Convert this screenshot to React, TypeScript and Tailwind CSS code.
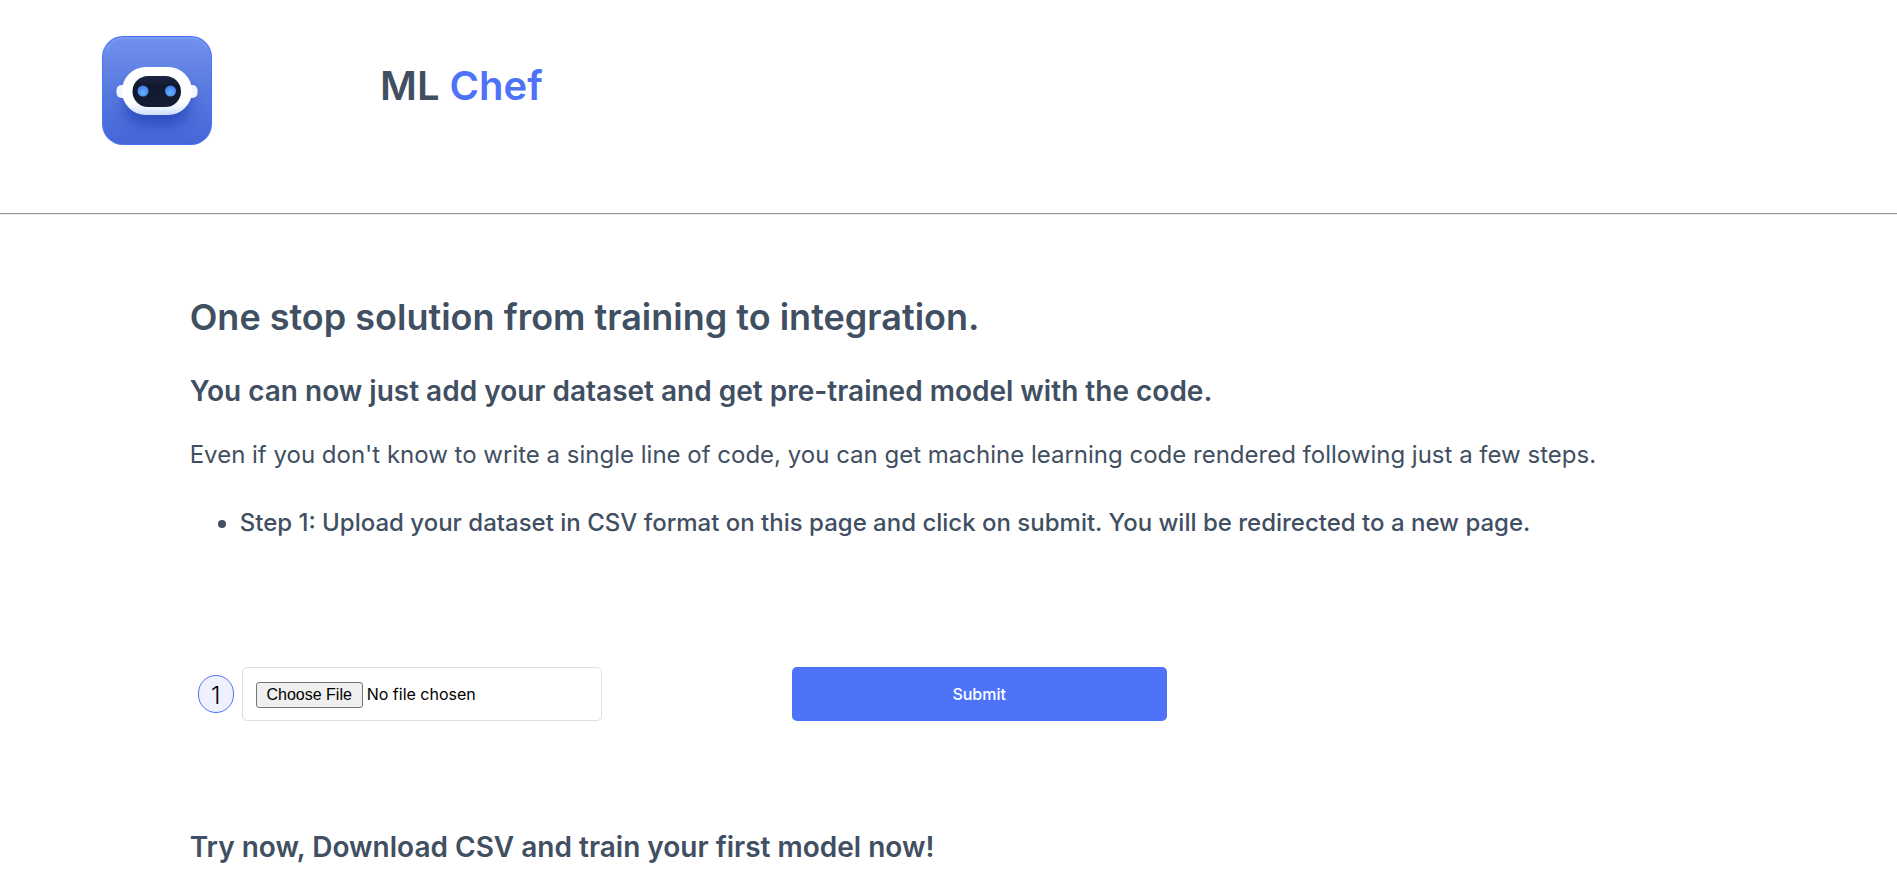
function RobotLogo() {
  return (
    <svg viewBox="0 0 110 110" className="h-[110px] w-[110px] shrink-0" role="img" aria-label="ML Chef robot">
      <defs>
        <linearGradient id="tile" x1="0" y1="0" x2="0" y2="1">
          <stop offset="0" stopColor="#7191ee" />
          <stop offset="0.5" stopColor="#587ade" />
          <stop offset="1" stopColor="#4566d8" />
        </linearGradient>
        <linearGradient id="head" x1="0" y1="0" x2="0" y2="1">
          <stop offset="0.75" stopColor="#ffffff" />
          <stop offset="1" stopColor="#cbdffc" />
        </linearGradient>
        <linearGradient id="face" x1="0" y1="0" x2="0" y2="1">
          <stop offset="0" stopColor="#1c2544" />
          <stop offset="0.35" stopColor="#10182c" />
          <stop offset="1" stopColor="#141d33" />
        </linearGradient>
        <radialGradient id="eye" cx="0.5" cy="0.65" r="0.6">
          <stop offset="0" stopColor="#62b4ff" />
          <stop offset="1" stopColor="#4a7cec" />
        </radialGradient>
        <filter id="soft" x="-40%" y="-40%" width="180%" height="180%">
          <feGaussianBlur stdDeviation="7" />
        </filter>
      </defs>
      <rect width="110" height="109" rx="21" fill="#4a72f5" />
      <rect x="1" y="1" width="108" height="107" rx="20" fill="url(#tile)" />
      <path d="M5 13Q9 3 20 2H90Q101 3 105 13" fill="none" stroke="#8fa9f5" strokeWidth="1" opacity="0.7" />
      <rect x="22" y="46" width="66" height="44" rx="22" fill="#2845b8" opacity="0.8" filter="url(#soft)" />
      <rect x="14.500" y="49" width="14" height="13" rx="5" fill="#f1f6ff" />
      <rect x="81.500" y="49" width="14" height="13" rx="5" fill="#f1f6ff" />
      <rect x="20" y="31" width="70" height="48" rx="24" fill="url(#head)" />
      <rect x="30.500" y="40" width="48.500" height="31" rx="15.500" fill="url(#face)" />
      <circle cx="41" cy="55" r="5.500" fill="url(#eye)" />
      <circle cx="68.500" cy="55" r="5.500" fill="url(#eye)" />
    </svg>
  );
}

export default function App() {
  return (
    <div className="min-h-screen bg-white font-['Inter','Liberation_Sans',sans-serif] text-[#414f62]">
      <header className="flex h-[213px] pt-9 pl-[102px]">
        <RobotLogo />
        <h1 className="ml-[168px] pt-[22px] text-[40px] leading-[56px] font-semibold">
          ML <span className="text-[#4e73f8]">Chef</span>
        </h1>
      </header>
      <hr className="h-[2px] border-t border-b border-t-[#949494] border-b-[#eeeeee]" />

      <main className="px-[10%] pt-[78px]">
        <h2 className="text-[36px] leading-[48px] font-semibold">One stop solution from training to integration.</h2>
        <h3 className="mt-7 text-[28px] leading-[44px] font-semibold">
          You can now just add your dataset and get pre-trained model with the code.
        </h3>
        <p className="mt-6 text-[24px] leading-[36px] font-normal">
          Even if you don't know to write a single line of code, you can get machine learning code rendered following
          just a few steps.
        </p>
        <ul className="mt-8 list-disc pl-[50px] text-[24px] leading-[36px] font-medium">
          <li>Step 1: Upload your dataset in CSV format on this page and click on submit. You will be redirected to a new page.</li>
        </ul>

        <form className="mt-[126px] flex items-center pl-2" onSubmit={(event) => event.preventDefault()}>
          <label
            htmlFor="dataset"
            className="flex h-[38px] w-9 items-center justify-center rounded-full border border-[#4e73f8] bg-[#eff2fe] pt-1 text-[24px] font-light text-black"
          >
            1
          </label>
          <input
            id="dataset"
            type="file"
            accept=".csv"
            className="ml-2 h-[54px] w-[360px] rounded-[5px] border border-[#dfdfdf] px-[13px] py-[13px] text-[16px] leading-[26px] text-black file:mr-1 file:h-[26px] file:w-[107px] file:rounded-[3px] file:border file:border-solid file:border-[#767676] file:bg-[#efefef] file:px-0 file:font-['Liberation_Sans',sans-serif] file:text-[16px] file:leading-[20px] file:font-normal file:text-black"
          />
          <button
            type="submit"
            className="ml-[190px] h-[54px] w-[375px] rounded-[5px] bg-[#4e73f8] text-[16px] font-medium text-white"
          >
            Submit
          </button>
        </form>

        <h3 className="mt-[104px] text-[28px] leading-[44px] font-semibold">
          Try now, Download CSV and train your first model now!
        </h3>
      </main>
    </div>
  );
}
